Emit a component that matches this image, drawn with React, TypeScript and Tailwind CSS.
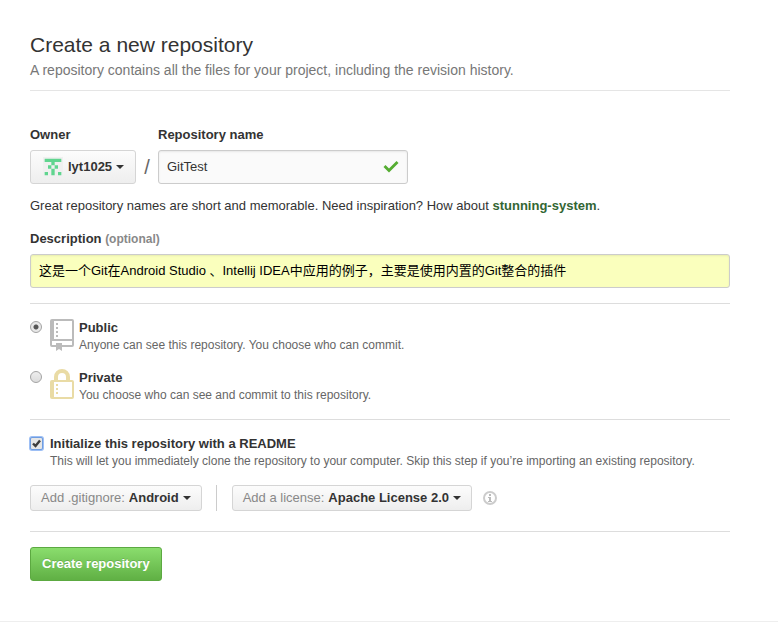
import { useState, type ReactNode } from "react";

function Caret() {
  return (
    <span
      aria-hidden="true"
      className="pointer-events-none h-0 w-0 border-x-4 border-t-4 border-x-transparent border-t-[#333333]"
    />
  );
}

function Avatar() {
  return (
    <svg width="20" height="20" viewBox="-0.5 -0.5 6 6" aria-hidden="true">
      <path fill="#f0f0f0" d="M-.5-.5h6v6h-6z" />
      <path fill="#60d58f" d="M0 0h5v1H0zM2 1h1v1H2zM1 2h1v1H1zM3 2h1v1H3zM2 3h1v2H2zM0 4h1v1H0zM4 4h1v1H4z" />
    </svg>
  );
}

function RepoIcon() {
  return (
    <svg width="24" height="32" viewBox="0 0 24 32" aria-hidden="true" fill="#bbbbbb" className="shrink-0">
      <path
        fillRule="evenodd"
        d="M2 0h20a2 2 0 0 1 2 2v24a2 2 0 0 1-2 2H12v4l-3-2-3 2v-4H2a2 2 0 0 1-2-2V2a2 2 0 0 1 2-2zM4 2v18h18V2zM2 22v4h4v-2h6v2h10v-4z"
      />
      <path d="M6 4h2v2H6zM6 8h2v2H6zM6 12h2v2H6zM6 16h2v2H6z" />
    </svg>
  );
}

function LockIcon() {
  return (
    <svg width="24" height="30" viewBox="0 0 24 30" aria-hidden="true" fill="#e9dba5" className="shrink-0">
      <path d="M4 12V8a8 8 0 0 1 16 0v4h-4V8a4 4 0 0 0-8 0v4z" />
      <path
        fillRule="evenodd"
        d="M2 11h20a2 2 0 0 1 2 2v15a2 2 0 0 1-2 2H2a2 2 0 0 1-2-2V13a2 2 0 0 1 2-2zM4 13v15h18V13z"
      />
      <path d="M6 15h2v2H6zM6 19h2v2H6zM6 23h2v2H6z" />
    </svg>
  );
}

function Rule({ className }: { className: string }) {
  return <hr className={`border-t border-[#dddddd] ${className}`} />;
}

type VisibilityProps = {
  value: string;
  title: string;
  note: string;
  icon: ReactNode;
  checked: boolean;
  onSelect: (value: string) => void;
};

function VisibilityOption({ value, title, note, icon, checked, onSelect }: VisibilityProps) {
  return (
    <label className="flex items-start">
      <input
        type="radio"
        name="visibility"
        value={value}
        checked={checked}
        onChange={() => onSelect(value)}
        className="mt-[3px] mr-2 h-3 w-3 shrink-0 appearance-none rounded-full border border-[#a3a3a3] bg-linear-to-b from-[#eeeeee] to-[#dcdcdc] checked:bg-[radial-gradient(circle,#555555_0,#555555_2px,#e8e8e8_3px)]"
      />
      <span className="mt-px">{icon}</span>
      <span className="mt-px ml-[5px] flex flex-col">
        <strong className="leading-[18px]">{title}</strong>
        <span className="text-xs leading-[17px] text-[#666666]">{note}</span>
      </span>
    </label>
  );
}

function MenuSelect({ label, options }: { label: string; options: string[] }) {
  return (
    <label className="flex h-[26px] items-center rounded-[3px] border border-[#d5d5d5] bg-linear-to-b from-[#fcfcfc] to-[#eeeeee] px-2.5">
      <span className="mr-1 text-[#888888]">{label}</span>
      <select className="mr-1 field-sizing-content appearance-none bg-transparent font-bold outline-none">
        {options.map((option) => (
          <option key={option}>{option}</option>
        ))}
      </select>
      <Caret />
    </label>
  );
}

export default function App() {
  const [visibility, setVisibility] = useState("public");

  return (
    <div className="bg-white font-['Liberation_Sans','Noto_Sans_CJK_SC',sans-serif] text-[13px] leading-5 text-[#333333]">
      <main className="pt-[30px] pr-12 pb-10 pl-[30px]">
        <header className="border-b border-[#e5e5e5] pb-2.5">
          <h1 className="text-[21px] leading-[30px]">Create a new repository</h1>
          <p className="text-sm leading-5 text-[#777777]">
            A repository contains all the files for your project, including the revision history.
          </p>
        </header>

        <form className="mt-[34px]" onSubmit={(event) => event.preventDefault()}>
          <div className="flex items-end">
            <div>
              <label htmlFor="owner" className="mb-[5px] block font-bold">
                Owner
              </label>
              <div className="flex h-[34px] w-[106px] items-center rounded-[3px] border border-[#d5d5d5] bg-linear-to-b from-[#fcfcfc] to-[#eeeeee] pl-3">
                <Avatar />
                <select
                  id="owner"
                  className="mr-1 ml-[5px] field-sizing-content appearance-none bg-transparent font-bold outline-none"
                >
                  <option>lyt1025</option>
                </select>
                <Caret />
              </div>
            </div>
            <span className="w-[22px] text-center text-xl leading-[34px] text-[#666666]">/</span>
            <div>
              <label htmlFor="name" className="mb-[5px] block font-bold">
                Repository name
              </label>
              <div className="flex h-[34px] w-[250px] items-center rounded-[3px] border border-[#cccccc] bg-[#fafafa] px-2 shadow-[inset_0_1px_2px_rgba(0,0,0,0.075)]">
                <input
                  id="name"
                  type="text"
                  defaultValue="GitTest"
                  className="min-w-0 flex-1 bg-transparent outline-none"
                />
                <svg width="16" height="16" viewBox="0 0 16 16" aria-hidden="true">
                  <path fill="#55ad32" d="M13.5 2 6 9.500 2.500 6 0.500 8 6 13.500 15.500 4z" />
                </svg>
              </div>
            </div>
          </div>

          <p className="mt-3">
            Great repository names are short and memorable. Need inspiration? How about{" "}
            <strong className="text-[#336633]">stunning-system</strong>.
          </p>

          <label htmlFor="description" className="mt-[13px] mb-[5px] block font-bold">
            Description <span className="text-xs text-[#888888]">(optional)</span>
          </label>
          <input
            id="description"
            type="text"
            defaultValue="这是一个Git在Android Studio 、Intellij IDEA中应用的例子，主要是使用内置的Git整合的插件"
            className="block h-[34px] w-full rounded-[3px] border border-[#cccccc] bg-[#faffbd] px-2 pb-1 text-black shadow-[inset_0_1px_2px_rgba(0,0,0,0.075)] outline-none"
          />

          <Rule className="mt-[15px]" />

          <div className="mt-3.5 flex flex-col gap-3.5">
            <VisibilityOption
              value="public"
              title="Public"
              note="Anyone can see this repository. You choose who can commit."
              icon={<RepoIcon />}
              checked={visibility === "public"}
              onSelect={setVisibility}
            />
            <VisibilityOption
              value="private"
              title="Private"
              note="You choose who can see and commit to this repository."
              icon={<LockIcon />}
              checked={visibility === "private"}
              onSelect={setVisibility}
            />
          </div>

          <Rule className="mt-[15px]" />

          <label className="mt-3.5 flex items-start">
            <span className="mt-[3px] mr-[7px] grid shrink-0">
              <input
                type="checkbox"
                defaultChecked
                className="peer col-start-1 row-start-1 h-[13px] w-[13px] appearance-none rounded-[2px] border border-[#6f9de0] bg-[#e6e6e6] shadow-[0_0_0_1px_#9dbff5]"
              />
              <svg
                width="13"
                height="13"
                viewBox="0 0 13 13"
                aria-hidden="true"
                className="pointer-events-none invisible col-start-1 row-start-1 peer-checked:visible"
              >
                <path d="M3 6.500 5.500 9 10 3.500" fill="none" stroke="#3c3c3c" strokeWidth="2.400" />
              </svg>
            </span>
            <span className="mt-px flex flex-col">
              <strong className="leading-[18px]">Initialize this repository with a README</strong>
              <span className="text-xs leading-[17px] text-[#666666]">
                This will let you immediately clone the repository to your computer. Skip this step if you’re
                importing an existing repository.
              </span>
            </span>
          </label>

          <div className="mt-[15px] flex items-center">
            <MenuSelect label="Add .gitignore:" options={["Android", "None"]} />
            <span className="mr-[15px] ml-3.5 h-[26px] w-px bg-[#cccccc]" />
            <MenuSelect label="Add a license:" options={["Apache License 2.0", "None"]} />
            <svg width="14" height="14" viewBox="0 0 14 14" aria-hidden="true" className="ml-[11px]">
              <circle cx="7" cy="7" r="6" fill="none" stroke="#cccccc" strokeWidth="2" />
              <path fill="#bbbbbb" d="M6 3h2v2H6zM5 6h3v4h1v1H5v-1h1V7H5z" />
            </svg>
          </div>

          <Rule className="mt-5" />

          <button
            type="submit"
            className="mt-[15px] block h-[34px] rounded-[3px] border border-[#5ca941] bg-linear-to-b from-[#8add6d] to-[#60b044] px-[11px] font-bold text-white [text-shadow:0_-1px_0_rgba(0,0,0,0.15)]"
          >
            Create repository
          </button>
        </form>
      </main>
      <footer className="border-t border-[#eeeeee]" />
    </div>
  );
}
